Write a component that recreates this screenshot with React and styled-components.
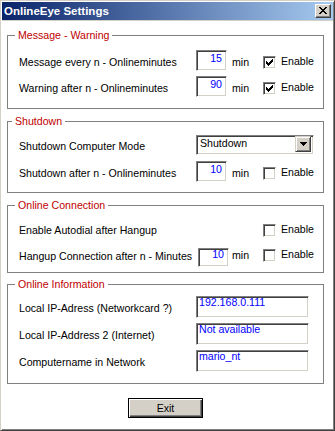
import React from "react";
import styled, { createGlobalStyle } from "styled-components";

const GlobalStyle = createGlobalStyle`
  html, body { margin: 0; padding: 0; background: #d4d0c8; }
  body { font-family: "Liberation Sans", Arial, sans-serif; font-size: 10.6px; color: #000; }
  * { box-sizing: border-box; }
`;

const Window = styled.div`
  width: 335px;
  height: 431px;
  display: flex;
  flex-direction: column;
  background: #d4d0c8;
  border: 1px solid;
  border-color: #d4d0c8 #404040 #404040 #d4d0c8;
  box-shadow: inset 1px 1px #fff, inset -1px -1px #808080;
  padding: 1px;
`;

const TitleBar = styled.div`
  height: 18px;
  flex: none;
  display: flex;
  align-items: center;
  justify-content: space-between;
  padding: 0 2px 0 2px;
  margin-bottom: 1px;
  background: linear-gradient(to right, #0a246a, #a6caf0);
`;

const Title = styled.div`
  color: #fff;
  font-weight: bold;
  font-size: 11.5px;
  line-height: 14px;
  white-space: nowrap;
`;

const CloseButton = styled.div`
  width: 16px;
  height: 14px;
  display: flex;
  align-items: center;
  justify-content: center;
  background: #d4d0c8;
  border: 1px solid;
  border-color: #fff #404040 #404040 #fff;
  box-shadow: inset -1px -1px #808080;
  padding-bottom: 1px;
`;

const Body = styled.div`
  flex: 1;
  background: #fff;
  display: flex;
  flex-direction: column;
  padding: 8px 0 0 5px;
`;

const Group = styled.fieldset`
  margin: ${(p) => p.$mt || 0}px 0 0 0;
  width: 317px;
  min-width: 0;
  border: 1px solid #808080;
  padding: ${(p) => p.$pt}px 9px ${(p) => p.$pb}px 11px;
  display: flex;
  flex-direction: column;
  gap: ${(p) => p.$gap}px;
`;

const Legend = styled.legend`
  color: #c00000;
  font-size: 10.6px;
  line-height: 13px;
  padding: 0 3px;
  margin-left: ${(p) => (p.$ml != null ? p.$ml : -4)}px;
`;

const Row = styled.div`
  display: grid;
  grid-template-columns: 177px 36px 31px auto;
  align-items: start;
  height: ${(p) => p.$h || 21}px;
`;

const Label = styled.div`
  line-height: 13px;
  white-space: nowrap;
  padding-top: ${(p) => (p.$top != null ? p.$top : 6)}px;
`;

const sunken = `
  border: 1px solid;
  border-color: #808080 #fff #fff #808080;
  box-shadow: inset 1px 1px #404040, inset -1px -1px #d4d0c8;
`;

const NumBox = styled.div`
  ${sunken}
  width: 31px;
  height: ${(p) => p.$h || 21}px;
  margin-left: ${(p) => p.$ml || 0}px;
  background: #fff;
  color: #0000ff;
  text-align: right;
  line-height: 10px;
  padding: ${(p) => (p.$pt != null ? p.$pt : 2)}px 4px 0 2px;
`;

const TextBox = styled.div`
  ${sunken}
  grid-column: 2 / -1;
  width: 113px;
  height: 22px;
  background: #fff;
  color: #0000ff;
  line-height: 10px;
  padding: 0 2px 0 2px;
  white-space: nowrap;
`;

const Unit = styled.div`
  line-height: 13px;
  padding-top: ${(p) => (p.$top != null ? p.$top : 6)}px;
`;

const CheckWrap = styled.div`
  grid-column: 4;
  display: flex;
  align-items: flex-start;
`;

const CheckBox = styled.div`
  ${sunken}
  width: 13px;
  height: 13px;
  margin-top: ${(p) => (p.$top != null ? p.$top : 6)}px;
  background: #fff;
  display: flex;
  align-items: center;
  justify-content: center;
`;

const CheckText = styled.div`
  margin-left: 5px;
  line-height: 13px;
  padding-top: ${(p) => (p.$top != null ? p.$top : 5)}px;
`;

const Combo = styled.div`
  ${sunken}
  grid-column: 2 / -1;
  width: 118px;
  height: 20px;
  background: #fff;
  display: flex;
  justify-content: space-between;
  padding: 2px 2px 2px 2px;
`;

const ComboText = styled.div`
  line-height: 10px;
  padding-left: 1px;
`;

const DropButton = styled.div`
  width: 16px;
  height: 16px;
  margin-top: -2px;
  background: #d4d0c8;
  border: 1px solid;
  border-color: #d4d0c8 #404040 #404040 #d4d0c8;
  box-shadow: inset 1px 1px #fff, inset -1px -1px #808080;
  display: flex;
  align-items: center;
  justify-content: center;
`;

const ExitButton = styled.div`
  width: 75px;
  height: 20px;
  margin: 14px 0 0 121px;
  background: #d4d0c8;
  border: 1px solid #000;
  box-shadow: inset 1px 1px #fff, inset -1px -1px #404040, inset -2px -2px #808080;
  display: flex;
  align-items: center;
  justify-content: center;
  line-height: 13px;
`;

const CheckMark = () => (
  <svg width="7" height="7" viewBox="0 0 7 7" shapeRendering="crispEdges">
    <path
      fill="#000"
      d="M6 0h1v1h-1z M5 1h2v1h-2z M0 2h1v1h-1z M4 2h3v1h-3z M0 3h2v1h-2z M3 3h3v1h-3z M0 4h5v1h-5z M1 5h3v1h-3z M2 6h1v1h-1z"
    />
  </svg>
);

const CloseX = () => (
  <svg width="8" height="7" viewBox="0 0 8 7" shapeRendering="crispEdges">
    <path
      fill="#000"
      d="M0 0h2v1h-2z M6 0h2v1h-2z M1 1h2v1h-2z M5 1h2v1h-2z M2 2h4v1h-4z M3 3h2v1h-2z M2 4h4v1h-4z M1 5h2v1h-2z M5 5h2v1h-2z M0 6h2v1h-2z M6 6h2v1h-2z"
    />
  </svg>
);

const DownArrow = () => (
  <svg width="7" height="4" viewBox="0 0 7 4" shapeRendering="crispEdges">
    <path fill="#000" d="M0 0h7v1h-7z M1 1h5v1h-5z M2 2h3v1h-3z M3 3h1v1h-1z" />
  </svg>
);

const Check = ({ checked, boxTop, textTop }) => (
  <CheckWrap>
    <CheckBox $top={boxTop}>{checked && <CheckMark />}</CheckBox>
    <CheckText $top={textTop}>Enable</CheckText>
  </CheckWrap>
);

export default function App() {
  return (
    <>
      <GlobalStyle />
      <Window>
        <TitleBar>
          <Title>OnlineEye Settings</Title>
          <CloseButton>
            <CloseX />
          </CloseButton>
        </TitleBar>
        <Body>
          <Group $pt={8} $pb={11} $gap={5}>
            <Legend>Message - Warning</Legend>
            <Row>
              <Label>Message every n - Onlineminutes</Label>
              <NumBox>15</NumBox>
              <Unit>min</Unit>
              <Check checked />
            </Row>
            <Row>
              <Label>Warning after n - Onlineminutes</Label>
              <NumBox>90</NumBox>
              <Unit>min</Unit>
              <Check checked />
            </Row>
          </Group>

          <Group $mt={6} $pt={7} $pb={10} $gap={6}>
            <Legend $ml={-7}>Shutdown</Legend>
            <Row $h={20}>
              <Label $top={5}>Shutdown Computer Mode</Label>
              <Combo>
                <ComboText>Shutdown</ComboText>
                <DropButton>
                  <DownArrow />
                </DropButton>
              </Combo>
            </Row>
            <Row>
              <Label>Shutdown after n - Onlineminutes</Label>
              <NumBox>10</NumBox>
              <Unit>min</Unit>
              <Check />
            </Row>
          </Group>

          <Group $mt={6} $pt={6} $pb={5} $gap={9}>
            <Legend>Online Connection</Legend>
            <Row>
              <Label>Enable Autodial after Hangup</Label>
              <Check />
            </Row>
            <Row $h={19}>
              <Label $top={2}>Hangup Connection after n - Minutes</Label>
              <NumBox $h={19} $pt={0} $ml={2}>10</NumBox>
              <Unit $top={1}>min</Unit>
              <Check boxTop={1} textTop={0} />
            </Row>
          </Group>

          <Group $mt={5} $pt={5} $pb={11} $gap={5}>
            <Legend>Online Information</Legend>
            <Row $h={22}>
              <Label>Local IP-Adress (Networkcard ?)</Label>
              <TextBox>192.168.0.111</TextBox>
            </Row>
            <Row $h={22}>
              <Label>Local IP-Address 2 (Internet)</Label>
              <TextBox>Not available</TextBox>
            </Row>
            <Row $h={22}>
              <Label>Computername in Network</Label>
              <TextBox>mario_nt</TextBox>
            </Row>
          </Group>

          <ExitButton>Exit</ExitButton>
        </Body>
      </Window>
    </>
  );
}
